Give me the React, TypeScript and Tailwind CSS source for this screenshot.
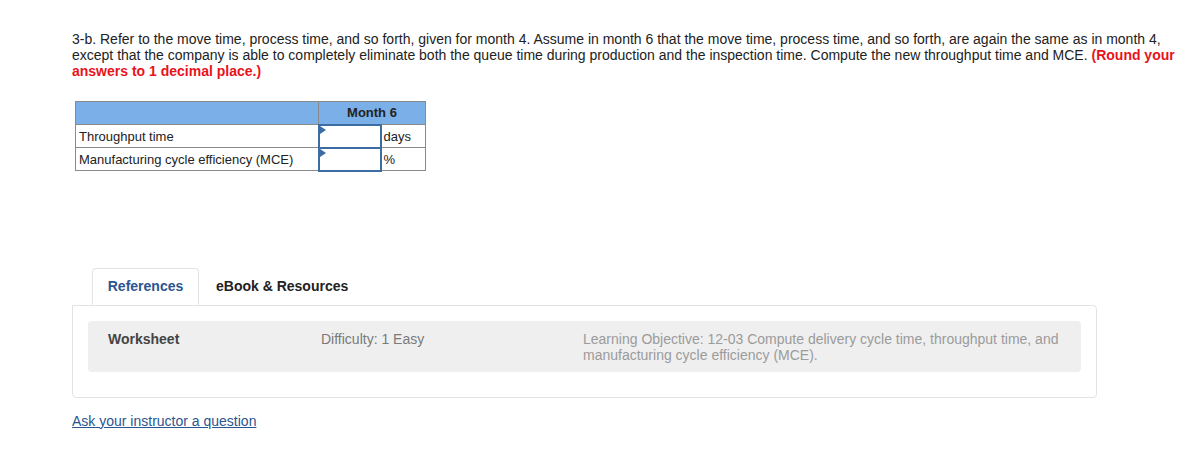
import React from "react";

const FONT = { fontFamily: '"Liberation Sans", Arial, sans-serif' };

function AnswerCell() {
  return (
    <td className="relative h-[23px] w-[62px] border-2 border-[#3b6ca3] p-0">
      <span className="absolute left-0 top-0 h-0 w-0 border-l-[6px] border-t-[4px] border-b-[4px] border-l-[#3b6ca3] border-t-transparent border-b-transparent" />
    </td>
  );
}

export default function App() {
  return (
    <div className="min-h-[453px] bg-white text-[#222]" style={FONT}>
      <div className="w-[1182px] pl-[72px] pt-[31px]">
        <p className="text-[14px] leading-[16px] text-[#222]">
          3-b. Refer to the move time, process time, and so forth, given for month 4. Assume in month 6 that the
          move time, process time, and so forth, are again the same as in month 4, except that the company is able
          to completely eliminate both the queue time during production and the inspection time. Compute the new
          throughput time and MCE.{" "}
          <b className="text-[#e8131b]">(Round your answers to 1 decimal place.)</b>
        </p>

        <table className="ml-[3px] mt-[22px] border-collapse text-[13px] leading-[15px]">
          <tbody>
            <tr className="h-[23px] bg-[#7aafe7]">
              <td className="w-[243px] border border-[#8a8a8a]" />
              <td colSpan={2} className="border border-[#8a8a8a] text-center font-bold text-[#222]">
                Month 6
              </td>
            </tr>
            <tr className="h-[23px]">
              <td className="border border-[#8a8a8a] px-[3px]">Throughput time</td>
              <AnswerCell />
              <td className="w-[45px] border border-[#8a8a8a] px-[2px]">days</td>
            </tr>
            <tr className="h-[23px]">
              <td className="border border-[#8a8a8a] px-[3px]">Manufacturing cycle efficiency (MCE)</td>
              <AnswerCell />
              <td className="border border-[#8a8a8a] px-[2px]">%</td>
            </tr>
          </tbody>
        </table>

        <div className="mt-[96px] w-[1025px]">
          <div className="flex pl-[20px] text-[14px] font-bold">
            <div className="relative -mb-px flex h-[37px] w-[107px] items-center justify-center rounded-t-[4px] border border-b-white border-[#e3e3e3] bg-white text-[#2b5590]">
              References
            </div>
            <div className="flex h-[37px] items-center px-[17px] text-[#222]">eBook &amp; Resources</div>
          </div>
          <div className="rounded-b-[4px] rounded-tr-[4px] border border-[#e3e3e3] px-[15px] pb-[25px] pt-[15px]">
            <div className="flex h-[51px] rounded-[4px] bg-[#efefef] pl-[20px] pt-[10px] text-[14px] leading-[16px]">
              <div className="w-[213px] font-bold text-[#444]">Worksheet</div>
              <div className="w-[262px] text-[#7a7a7a]">Difficulty: 1 Easy</div>
              <div className="w-[490px] text-[#9b9b9b]">
                Learning Objective: 12-03 Compute delivery cycle time, throughput time, and manufacturing cycle
                efficiency (MCE).
              </div>
            </div>
          </div>
        </div>

        <a href="#" className="mt-[15px] inline-block text-[14px] leading-[16px] text-[#2b5590] underline">
          Ask your instructor a question
        </a>
      </div>
    </div>
  );
}
